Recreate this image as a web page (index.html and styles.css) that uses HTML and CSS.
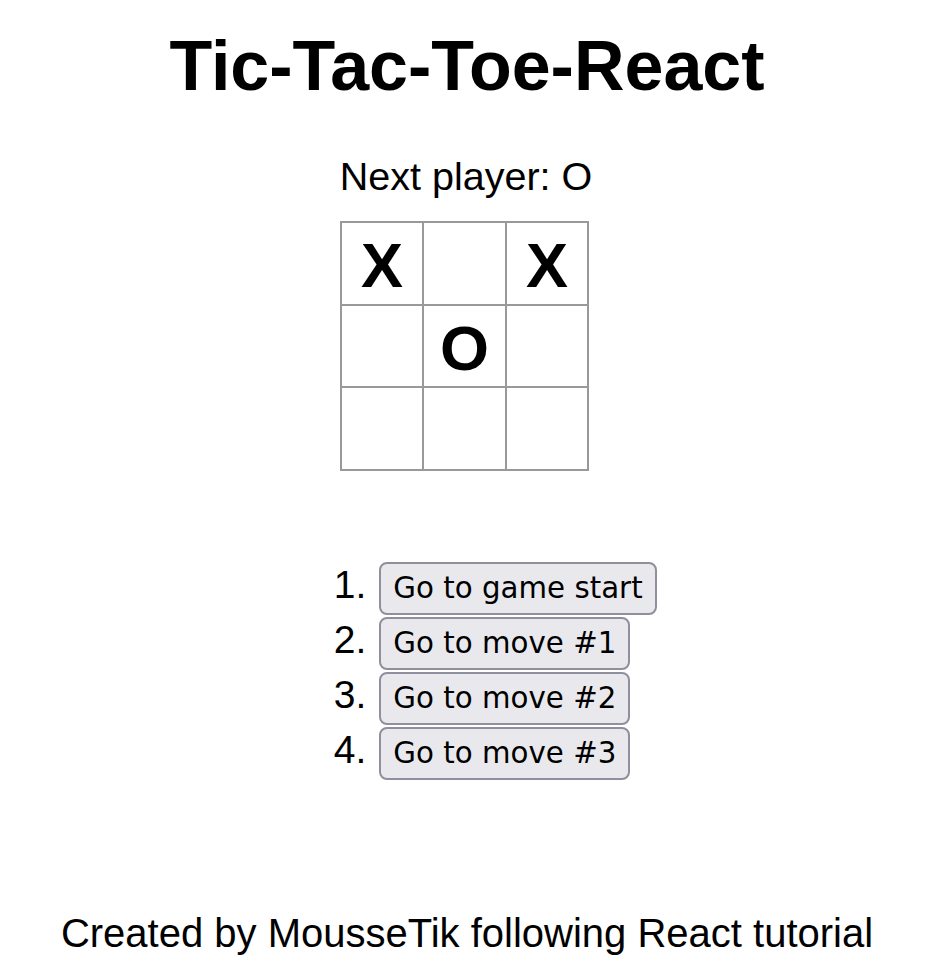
FILE: index.html
```html
<!DOCTYPE html>
<html lang="en">
<head>
<meta charset="utf-8">
<title>Tic-Tac-Toe-React</title>
<link rel="stylesheet" href="styles.css">
</head>
<body>
<div class="page">
  <h1 class="title">Tic-Tac-Toe-React</h1>
  <div class="game">
    <div class="game-board">
      <div class="status">Next player: O</div>
      <div class="board">
        <button class="square">X</button>
        <button class="square"></button>
        <button class="square">X</button>
        <button class="square"></button>
        <button class="square">O</button>
        <button class="square"></button>
        <button class="square"></button>
        <button class="square"></button>
        <button class="square"></button>
      </div>
    </div>
    <ol class="moves">
      <li class="move"><button class="move-btn">Go to game start</button></li>
      <li class="move"><button class="move-btn">Go to move #1</button></li>
      <li class="move"><button class="move-btn">Go to move #2</button></li>
      <li class="move"><button class="move-btn">Go to move #3</button></li>
    </ol>
  </div>
  <footer class="credit">Created by MousseTik following React tutorial</footer>
</div>
</body>
</html>
```

FILE: styles.css
```css
html, body {
  margin: 0;
  padding: 0;
  background: #ffffff;
}

body {
  font-family: "Liberation Sans", Arial, sans-serif;
  color: #000000;
}

.page {
  box-sizing: border-box;
  min-height: 963px;
  display: flex;
  flex-direction: column;
  align-items: center;
  padding: 26px 8px 7px 0;
}

.title {
  margin: 0;
  font-size: 70px;
  font-weight: bold;
  line-height: normal;
}

.game {
  display: flex;
  flex-direction: column;
  align-items: center;
}

.game-board {
  display: flex;
  flex-direction: column;
  align-items: flex-start;
  margin-right: 2px;
}

.status {
  margin-top: 48px;
  font-size: 39.5px;
  line-height: normal;
}

.board {
  margin-top: 22px;
  display: grid;
  grid-template-columns: repeat(3, 80.5px);
  grid-template-rows: repeat(3, 80.5px);
  gap: 2px;
  padding: 2px;
  background: #999999;
}

.square {
  margin: 0;
  border: none;
  background: #ffffff;
  font-family: "Liberation Sans", Arial, sans-serif;
  font-weight: bold;
  font-size: 63px;
  line-height: 1;
  color: #000000;
  padding: 5px 0 0 0;
}

.moves {
  margin: 91px 0 0 6px;
  padding: 0 0 0 96px;
  font-size: 39px;
  line-height: 39px;
}

.move {
  margin-bottom: 2px;
}

.move::marker {
  content: counter(list-item) ".\2004";
}

.move-btn {
  display: inline-block;
  vertical-align: baseline;
  margin: 0;
  padding: 7px 12px;
  border: 2px solid #8f8f9d;
  border-radius: 8px;
  background: #e9e9ed;
  color: #000000;
  font-family: "DejaVu Sans", Verdana, sans-serif;
  font-size: 29.3px;
  line-height: 35px;
}

.credit {
  margin-top: auto;
  font-size: 40px;
  line-height: normal;
}
```
